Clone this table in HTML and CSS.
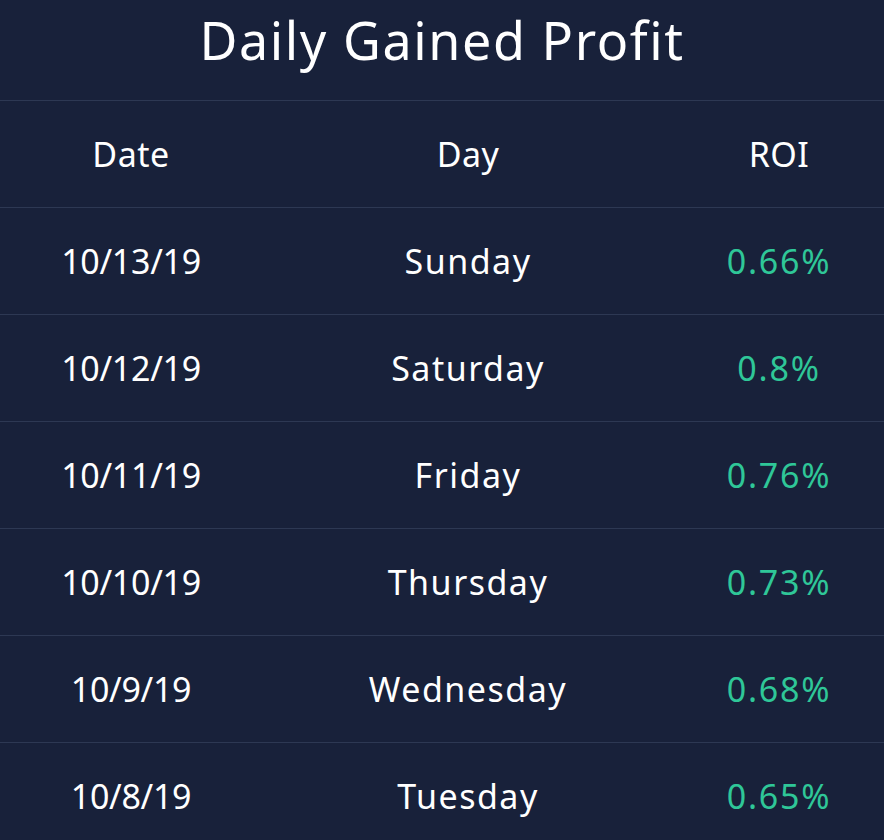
FILE: index.html
```html
<!DOCTYPE html>
<html lang="en">
<head>
	<meta charset="UTF-8">
	<title>Daily Gained Profit</title>
	<link rel="stylesheet" href="styles.css">
</head>
<body>
<div class="wrap">
	<h2 class="title">Daily Gained Profit</h2>
	<div class="table">
		<div class="row head">
			<div class="cell">Date</div>
			<div class="cell">Day</div>
			<div class="cell">ROI</div>
		</div>
		<div class="row">
			<div class="cell date">10/13/19</div>
			<div class="cell day">Sunday</div>
			<div class="cell roi">0.66%</div>
		</div>
		<div class="row">
			<div class="cell date">10/12/19</div>
			<div class="cell day">Saturday</div>
			<div class="cell roi">0.8%</div>
		</div>
		<div class="row">
			<div class="cell date">10/11/19</div>
			<div class="cell day">Friday</div>
			<div class="cell roi">0.76%</div>
		</div>
		<div class="row">
			<div class="cell date">10/10/19</div>
			<div class="cell day">Thursday</div>
			<div class="cell roi">0.73%</div>
		</div>
		<div class="row">
			<div class="cell date">10/9/19</div>
			<div class="cell day">Wednesday</div>
			<div class="cell roi">0.68%</div>
		</div>
		<div class="row">
			<div class="cell date">10/8/19</div>
			<div class="cell day">Tuesday</div>
			<div class="cell roi">0.65%</div>
		</div>
	</div>
</div>
</body>
</html>
```

FILE: styles.css
```css
html, body{
	margin: 0;
	padding: 0;
	background: #18213a;
}
.wrap{
	width: 884px;
	height: 840px;
	overflow: hidden;
	background: #18213a;
	color: #fff;
	font-family: "Noto Sans", "DejaVu Sans", sans-serif;
}
.title{
	margin: 0;
	height: 100px;
	line-height: 80px;
	text-align: center;
	font-size: 52px;
	font-weight: 400;
	letter-spacing: 1.6px;
}
.row{
	display: grid;
	grid-template-columns: 262px 412px 210px;
	height: 106px;
	border-top: 1px solid #2d3853;
	align-items: center;
}
.cell{
	text-align: center;
	font-size: 34px;
	letter-spacing: 0.5px;
}
.date{
	letter-spacing: -0.3px;
}
.day{
	letter-spacing: 1.5px;
}
.roi{
	color: #2fc798;
	letter-spacing: 1.8px;
}
```
